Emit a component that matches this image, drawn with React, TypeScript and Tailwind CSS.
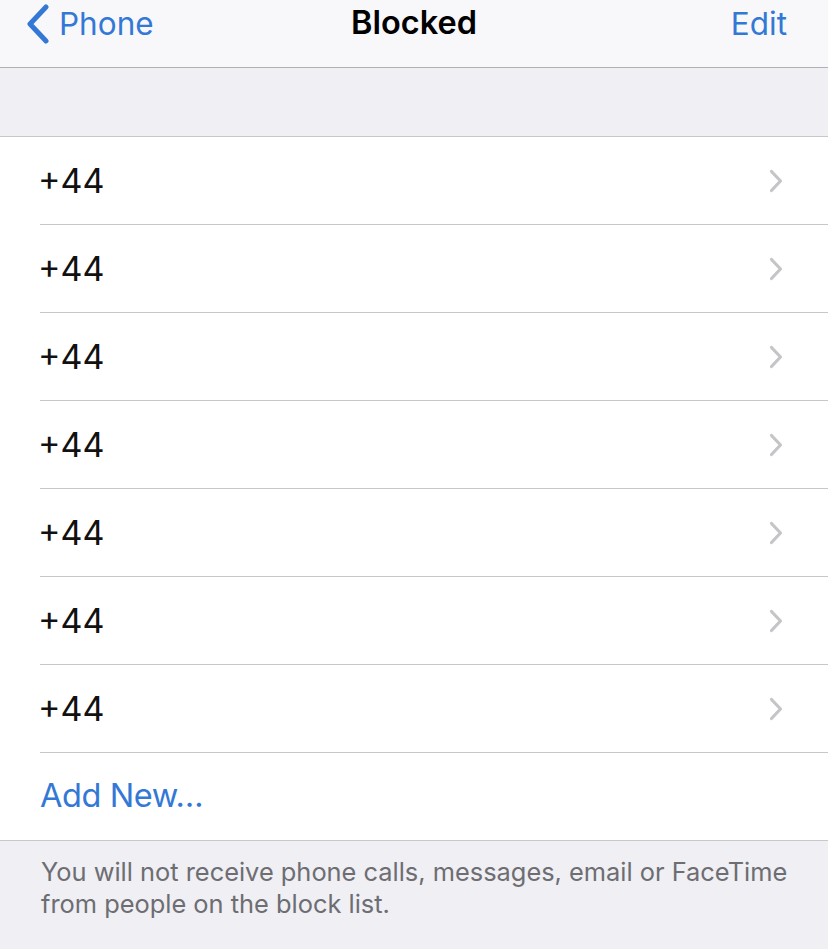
import * as React from "react";

const numbers = ["+44", "+44", "+44", "+44", "+44", "+44", "+44"];

function Chevron({ className }: { className?: string }) {
  return (
    <svg viewBox="0 0 14 24" className={className} fill="none">
      <path
        d="M2.5 2.5l9 9.5-9 9.5"
        stroke="currentColor"
        strokeWidth="3.2"
        strokeLinecap="round"
        strokeLinejoin="round"
      />
    </svg>
  );
}

export default function App() {
  return (
    <div
      className="w-[828px] h-[949px] bg-[#efeff4] overflow-hidden"
      style={{ fontFamily: "Inter, 'Liberation Sans', sans-serif" }}
    >
      {/* nav bar */}
      <header className="relative h-[68px] bg-[#f8f8fa] border-b border-[#b2b2b6] flex items-start pt-[2px]">
        <button className="flex items-center text-[#3478d6] pl-[26px] h-[44px]">
          <svg viewBox="0 0 24 40" className="w-[24px] h-[40px]" fill="none">
            <path
              d="M20 3L4 20l16 17"
              stroke="currentColor"
              strokeWidth="5"
              strokeLinecap="round"
              strokeLinejoin="round"
            />
          </svg>
          <span className="ml-[9px] text-[31.5px] leading-none">Phone</span>
        </button>
        <h1 className="absolute left-0 right-0 top-[1px] h-[44px] flex items-center justify-center text-[32.5px] font-semibold text-black leading-none">
          Blocked
        </h1>
        <button className="ml-auto mr-[41px] h-[44px] flex items-center text-[31.5px] text-[#3478d6] leading-none">
          Edit
        </button>
      </header>

      <div className="h-[69px] bg-[#efeff4] border-b border-[#c8c7cc]" />

      {/* blocked list */}
      <ul className="bg-white border-b border-[#c8c7cc]">
        {numbers.map((n, i) => (
          <li key={i} className="pl-[40px]">
            <div className="h-[88px] border-b border-[#c8c7cc] flex items-center pr-[45px]">
              <span className="-ml-[2px] text-[34px] text-[#111] leading-none">{n}</span>
              <Chevron className="ml-auto w-[14px] h-[24px] text-[#c4c4c9]" />
            </div>
          </li>
        ))}
        <li className="pl-[40px] h-[87px] flex items-center">
          <span className="text-[32.5px] tracking-[-0.4px] text-[#3478d6] leading-none">Add New…</span>
        </li>
      </ul>

      <p className="pl-[41px] pr-[20px] pt-[15px] text-[25.4px] leading-[32px] text-[#6d6d72]">
        You will not receive phone calls, messages, email or FaceTime from people on the block list.
      </p>
    </div>
  );
}
